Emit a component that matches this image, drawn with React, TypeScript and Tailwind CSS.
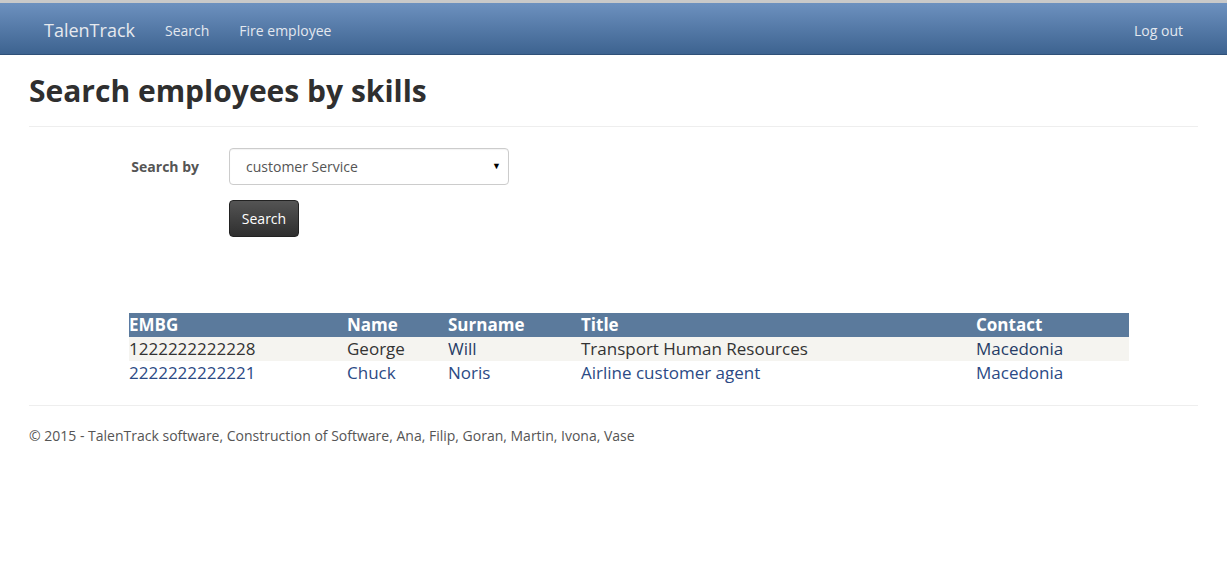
import React from 'react';

const rows = [
  { embg: '1222222222228', name: 'George', surname: 'Will', title: 'Transport Human Resources', contact: 'Macedonia' },
  { embg: '2222222222221', name: 'Chuck', surname: 'Noris', title: 'Airline customer agent', contact: 'Macedonia' },
];

export default function App() {
  return (
    <div className="min-h-[576px] bg-white font-['Open_Sans',sans-serif] text-[14px] text-[#333]">
      {/* Navbar */}
      <div className="h-[55px] border-t-[3px] border-t-[#c9c9c9] border-b border-b-[#2f5078] bg-gradient-to-b from-[#6d91bf] to-[#3d6390]">
        <div className="mx-[29px] flex h-full items-center px-[15px] pt-[4px]">
          <span className="pr-[30px] text-[18px] text-[#e6e9ee]">TalenTrack</span>
          <a className="text-[#e3e8ef]">Search</a>
          <a className="ml-[30px] text-[#e3e8ef]">Fire employee</a>
          <a className="ml-auto text-[#e3e8ef]">Log out</a>
        </div>
      </div>

      <div className="mx-[29px]">
        <h2 className="mt-[19px] text-[30px] font-bold leading-[33px] text-[#2f2f2f]">Search employees by skills</h2>
        <hr className="mt-[19px] border-t border-[#eeeeee]" />

        {/* Form */}
        <div className="mt-[21px] flex items-center">
          <label className="w-[200px] pr-[30px] text-right text-[14px] font-bold leading-[18px] text-[#555]">Search by</label>
          <div className="relative w-[280px]">
            <select className="h-[37px] w-full appearance-none rounded-[4px] border border-[#cccccc] bg-white pl-[16px] text-[14px] text-[#555] shadow-[inset_0_1px_1px_rgba(0,0,0,0.05)]">
              <option>customer Service</option>
            </select>
            <span className="pointer-events-none absolute right-[8px] top-[11px] text-[9px] text-black">▼</span>
          </div>
        </div>
        <div className="mt-[15px] pl-[200px]">
          <button className="h-[37px] w-[70px] rounded-[4px] border border-[#222] bg-gradient-to-b from-[#545454] to-[#2f2f2f] text-[14px] text-white">
            Search
          </button>
        </div>

        {/* Results */}
        <table className="ml-[100px] mt-[76px] w-[1000px] border-collapse text-left text-[17px] leading-[24px]">
          <thead>
            <tr className="bg-[#5b7a9c] text-white">
              <th className="w-[218px] font-bold">EMBG</th>
              <th className="w-[101px] font-bold">Name</th>
              <th className="w-[133px] font-bold">Surname</th>
              <th className="w-[395px] font-bold">Title</th>
              <th className="font-bold">Contact</th>
            </tr>
          </thead>
          <tbody>
            <tr className="bg-[#f5f4f0] text-[#333]">
              <td>{rows[0].embg}</td>
              <td>{rows[0].name}</td>
              <td className="text-[#263c66]">{rows[0].surname}</td>
              <td>{rows[0].title}</td>
              <td className="text-[#263c66]">{rows[0].contact}</td>
            </tr>
            <tr className="bg-white text-[#2b4a85]">
              <td>{rows[1].embg}</td>
              <td>{rows[1].name}</td>
              <td>{rows[1].surname}</td>
              <td>{rows[1].title}</td>
              <td>{rows[1].contact}</td>
            </tr>
          </tbody>
        </table>

        <hr className="mt-[20px] border-t border-[#eeeeee]" />
        <footer className="pt-[20px]">
          <p className="text-[14px] leading-[20px] text-[#555]">
            © 2015 - TalenTrack software, Construction of Software, Ana, Filip, Goran, Martin, Ivona, Vase
          </p>
        </footer>
      </div>
    </div>
  );
}
